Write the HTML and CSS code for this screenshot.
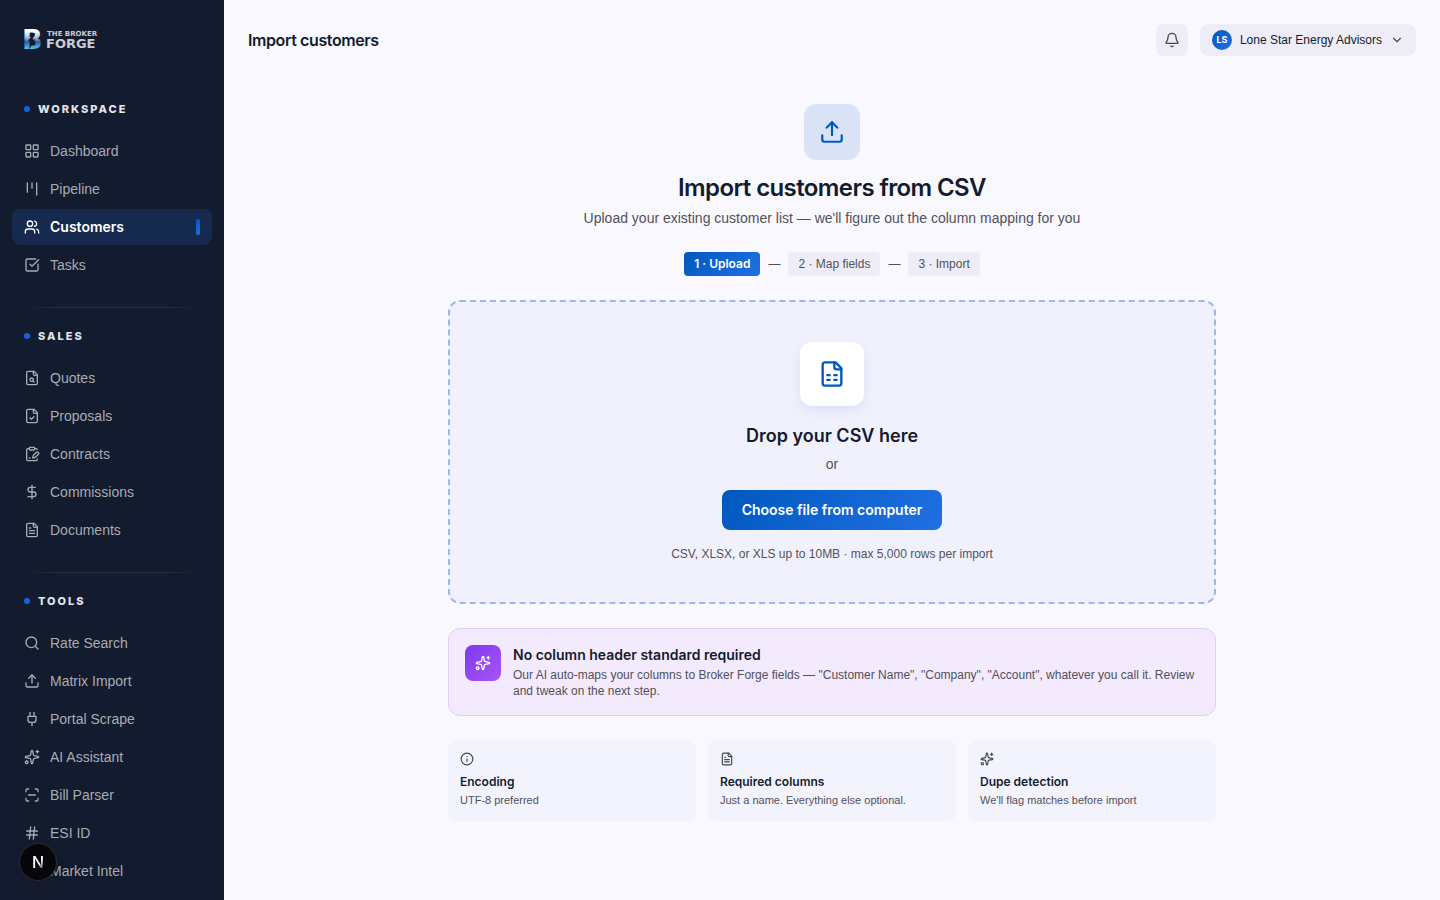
FILE: index.html
```html
<!DOCTYPE html>
<html lang="en">
<head>
    <meta charset="UTF-8">
    <meta name="viewport" content="width=device-width, initial-scale=1">
    <title>Import customers</title>
    <link rel="stylesheet" href="styles.css">
</head>
<body>
<svg class="sprite" aria-hidden="true">
    <symbol id="i-grid" viewBox="0 0 24 24"><rect x="3" y="3" width="7" height="7" rx="1"/><rect x="14" y="3" width="7" height="7" rx="1"/><rect x="14" y="14" width="7" height="7" rx="1"/><rect x="3" y="14" width="7" height="7" rx="1"/></symbol>
    <symbol id="i-kanban" viewBox="0 0 24 24"><path d="M5 3v14M12 3v8M19 3v18"/></symbol>
    <symbol id="i-users" viewBox="0 0 24 24"><path d="M16 21v-2a4 4 0 0 0-4-4H6a4 4 0 0 0-4 4v2"/><path d="M16 3.128a4 4 0 0 1 0 7.744"/><path d="M22 21v-2a4 4 0 0 0-3-3.87"/><circle cx="9" cy="7" r="4"/></symbol>
    <symbol id="i-check" viewBox="0 0 24 24"><path d="M21 10.656V19a2 2 0 0 1-2 2H5a2 2 0 0 1-2-2V5a2 2 0 0 1 2-2h12.344"/><path d="m9 11 3 3L22 4"/></symbol>
    <symbol id="i-file-search" viewBox="0 0 24 24"><path d="M15 2H6a2 2 0 0 0-2 2v16a2 2 0 0 0 2 2h12a2 2 0 0 0 2-2V7Z"/><path d="M14 2v4a2 2 0 0 0 2 2h4"/><circle cx="11.5" cy="14.5" r="2.5"/><path d="M13.3 16.3 15 18"/></symbol>
    <symbol id="i-file-check" viewBox="0 0 24 24"><path d="M15 2H6a2 2 0 0 0-2 2v16a2 2 0 0 0 2 2h12a2 2 0 0 0 2-2V7Z"/><path d="M14 2v4a2 2 0 0 0 2 2h4"/><path d="m9 15 2 2 4-4"/></symbol>
    <symbol id="i-contract" viewBox="0 0 24 24"><rect x="8" y="2" width="8" height="4" rx="1"/><path d="M8 4H6a2 2 0 0 0-2 2v14a2 2 0 0 0 2 2h12a2 2 0 0 0 2-2v-.5"/><path d="M16 4h2a2 2 0 0 1 1.73 1"/><path d="M8 18h1"/><path d="M21.378 12.626a1 1 0 0 0-3.004-3.004l-4.01 4.012a2 2 0 0 0-.506.854l-.837 2.87a.5.5 0 0 0 .62.62l2.87-.837a2 2 0 0 0 .854-.506z"/></symbol>
    <symbol id="i-dollar" viewBox="0 0 24 24"><path d="M12 2v20"/><path d="M17 5H9.5a3.5 3.5 0 0 0 0 7h5a3.5 3.5 0 0 1 0 7H6"/></symbol>
    <symbol id="i-file" viewBox="0 0 24 24"><path d="M15 2H6a2 2 0 0 0-2 2v16a2 2 0 0 0 2 2h12a2 2 0 0 0 2-2V7Z"/><path d="M14 2v4a2 2 0 0 0 2 2h4"/><path d="M10 9H8M16 13H8M16 17H8"/></symbol>
    <symbol id="i-search" viewBox="0 0 24 24"><circle cx="11" cy="11" r="8"/><path d="m21 21-4.34-4.34"/></symbol>
    <symbol id="i-upload" viewBox="0 0 24 24"><path d="M12 3v12"/><path d="m17 8-5-5-5 5"/><path d="M21 15v4a2 2 0 0 1-2 2H5a2 2 0 0 1-2-2v-4"/></symbol>
    <symbol id="i-plug" viewBox="0 0 24 24"><path d="M12 22v-5M9 8V2M15 8V2"/><path d="M18 8v5a4 4 0 0 1-4 4h-4a4 4 0 0 1-4-4V8Z"/></symbol>
    <symbol id="i-sparkles" viewBox="0 0 24 24"><path d="M11.017 2.814a1 1 0 0 1 1.966 0l1.051 5.558a2 2 0 0 0 1.594 1.594l5.558 1.051a1 1 0 0 1 0 1.966l-5.558 1.051a2 2 0 0 0-1.594 1.594l-1.051 5.558a1 1 0 0 1-1.966 0l-1.051-5.558a2 2 0 0 0-1.594-1.594l-5.558-1.051a1 1 0 0 1 0-1.966l5.558-1.051a2 2 0 0 0 1.594-1.594z"/><path d="M20 2v4M22 4h-4"/><circle cx="4" cy="20" r="2"/></symbol>
    <symbol id="i-scan" viewBox="0 0 24 24"><path d="M3 7V5a2 2 0 0 1 2-2h2M17 3h2a2 2 0 0 1 2 2v2M21 17v2a2 2 0 0 1-2 2h-2M7 21H5a2 2 0 0 1-2-2v-2M7 12h10"/></symbol>
    <symbol id="i-hash" viewBox="0 0 24 24"><path d="M4 9h16M4 15h16M10 3 8 21M16 3l-2 18"/></symbol>
    <symbol id="i-trend" viewBox="0 0 24 24"><path d="M16 7h6v6"/><path d="m22 7-8.5 8.5-5-5L2 17"/></symbol>
    <symbol id="i-bell" viewBox="0 0 24 24"><path d="M10.268 21a2 2 0 0 0 3.464 0"/><path d="M3.262 15.326A1 1 0 0 0 4 17h16a1 1 0 0 0 .74-1.673C19.41 13.956 18 12.499 18 8A6 6 0 0 0 6 8c0 4.499-1.411 5.956-2.738 7.326"/></symbol>
    <symbol id="i-chevron" viewBox="0 0 24 24"><path d="m6 9 6 6 6-6"/></symbol>
    <symbol id="i-sheet" viewBox="0 0 24 24"><path d="M15 2H6a2 2 0 0 0-2 2v16a2 2 0 0 0 2 2h12a2 2 0 0 0 2-2V7Z"/><path d="M14 2v4a2 2 0 0 0 2 2h4"/><path d="M8 13h2M14 13h2M8 17h2M14 17h2"/></symbol>
    <symbol id="i-info" viewBox="0 0 24 24"><circle cx="12" cy="12" r="10"/><path d="M12 16v-4M12 8h.01"/></symbol>
</svg>

<div class="app">
    <aside class="sidebar">
        <a href="#" class="logo" aria-label="The Broker Forge">
            <svg width="76" height="24" viewBox="0 0 76 24">
                <defs>
                    <linearGradient id="b-fill" x1="0" y1="0" x2="0" y2="1">
                        <stop offset="0.25" stop-color="#ffffff"/>
                        <stop offset="0.45" stop-color="#a9b4c4"/>
                        <stop offset="0.58" stop-color="#2a5f9a"/>
                        <stop offset="0.82" stop-color="#5cc8f5"/>
                    </linearGradient>
                </defs>
                <text class="logo-b" x="-2" y="21" fill="url(#b-fill)">B</text>
                <path d="M9.500 5 4 13h3L4.500 22.500 11 11.500H8.500L11 5z" fill="#131b2e"/>
                <text class="logo-the" x="23" y="8">THE BROKER</text>
                <text class="logo-forge" x="22" y="20">FORGE</text>
            </svg>
        </a>

        <nav class="nav">
            <section class="group">
                <h2 class="group-title">Workspace</h2>
                <a href="#" class="nav-item"><svg class="icon"><use href="#i-grid"/></svg>Dashboard</a>
                <a href="#" class="nav-item"><svg class="icon"><use href="#i-kanban"/></svg>Pipeline</a>
                <a href="#" class="nav-item active" aria-current="page"><svg class="icon"><use href="#i-users"/></svg>Customers</a>
                <a href="#" class="nav-item"><svg class="icon"><use href="#i-check"/></svg>Tasks</a>
            </section>
            <section class="group">
                <h2 class="group-title">Sales</h2>
                <a href="#" class="nav-item"><svg class="icon"><use href="#i-file-search"/></svg>Quotes</a>
                <a href="#" class="nav-item"><svg class="icon"><use href="#i-file-check"/></svg>Proposals</a>
                <a href="#" class="nav-item"><svg class="icon"><use href="#i-contract"/></svg>Contracts</a>
                <a href="#" class="nav-item"><svg class="icon"><use href="#i-dollar"/></svg>Commissions</a>
                <a href="#" class="nav-item"><svg class="icon"><use href="#i-file"/></svg>Documents</a>
            </section>
            <section class="group">
                <h2 class="group-title">Tools</h2>
                <a href="#" class="nav-item"><svg class="icon"><use href="#i-search"/></svg>Rate Search</a>
                <a href="#" class="nav-item"><svg class="icon"><use href="#i-upload"/></svg>Matrix Import</a>
                <a href="#" class="nav-item"><svg class="icon"><use href="#i-plug"/></svg>Portal Scrape</a>
                <a href="#" class="nav-item"><svg class="icon"><use href="#i-sparkles"/></svg>AI Assistant</a>
                <a href="#" class="nav-item"><svg class="icon"><use href="#i-scan"/></svg>Bill Parser</a>
                <a href="#" class="nav-item"><svg class="icon"><use href="#i-hash"/></svg>ESI ID</a>
                <a href="#" class="nav-item"><svg class="icon"><use href="#i-trend"/></svg>Market Intel</a>
            </section>
        </nav>
    </aside>

    <div class="page">
        <header class="topbar">
            <h1 class="topbar-title">Import customers</h1>
            <div class="topbar-actions">
                <button type="button" class="bell" aria-label="Notifications"><svg class="icon"><use href="#i-bell"/></svg></button>
                <button type="button" class="account">
                    <span class="avatar">LS</span>
                    <span class="account-name">Lone Star Energy Advisors</span>
                    <svg class="icon icon-sm"><use href="#i-chevron"/></svg>
                </button>
            </div>
        </header>

        <main class="content">
            <div class="intro">
                <div class="intro-icon"><svg class="icon"><use href="#i-upload"/></svg></div>
                <h2 class="intro-title">Import customers from CSV</h2>
                <p class="intro-text">Upload your existing customer list — we'll figure out the column mapping for you</p>
            </div>

            <div class="steps">
                <span class="step current">1 · Upload</span>
                <span>—</span>
                <span class="step">2 · Map fields</span>
                <span>—</span>
                <span class="step">3 · Import</span>
            </div>

            <div class="dropzone">
                <div class="drop-icon"><svg class="icon"><use href="#i-sheet"/></svg></div>
                <h3 class="drop-title">Drop your CSV here</h3>
                <p class="drop-or">or</p>
                <button type="button" class="choose">Choose file from computer</button>
                <p class="drop-hint">CSV, XLSX, or XLS up to 10MB · max 5,000 rows per import</p>
            </div>

            <div class="ai-note">
                <div class="ai-icon"><svg class="icon"><use href="#i-sparkles"/></svg></div>
                <div class="ai-body">
                    <h3 class="ai-title">No column header standard required</h3>
                    <p class="ai-text">Our AI auto-maps your columns to Broker Forge fields — "Customer Name", "Company", "Account", whatever you call it. Review and tweak on the next step.</p>
                </div>
            </div>

            <div class="tips">
                <div class="tip">
                    <svg class="icon icon-sm"><use href="#i-info"/></svg>
                    <h4 class="tip-title">Encoding</h4>
                    <p class="tip-text">UTF-8 preferred</p>
                </div>
                <div class="tip">
                    <svg class="icon icon-sm"><use href="#i-file"/></svg>
                    <h4 class="tip-title">Required columns</h4>
                    <p class="tip-text">Just a name. Everything else optional.</p>
                </div>
                <div class="tip">
                    <svg class="icon icon-sm"><use href="#i-sparkles"/></svg>
                    <h4 class="tip-title">Dupe detection</h4>
                    <p class="tip-text">We'll flag matches before import</p>
                </div>
            </div>
        </main>
    </div>
</div>

<button type="button" class="dev-badge" aria-label="Open dev tools">
    <svg width="36" height="36" viewBox="0 0 36 36">
        <defs>
            <linearGradient id="n-fill" x1="0" y1="0" x2="1" y2="1">
                <stop offset="0.6" stop-color="#ffffff"/>
                <stop offset="0.85" stop-color="#ffffff" stop-opacity="0.2"/>
            </linearGradient>
        </defs>
        <text class="dev-n" x="18" y="24" text-anchor="middle" fill="url(#n-fill)">N</text>
    </svg>
</button>
</body>
</html>
```
FILE: styles.css
```css
* {
    box-sizing: border-box;
}

body {
    margin: 0;
    font-family: "Liberation Sans", Arial, sans-serif;
    font-size: 14px;
    line-height: 20px;
    color: #131b2e;
    background-color: #faf8ff;
}

h1, h2, h3, h4, p {
    margin: 0;
}

button {
    font: inherit;
    color: inherit;
    border: none;
    padding: 0;
    cursor: pointer;
}

h1, h2, h3, h4,
.active,
.current,
.choose,
.avatar {
    font-family: Inter, "Liberation Sans", sans-serif;
}

a {
    color: inherit;
    text-decoration: none;
}

.sprite {
    display: none;
}

.icon {
    width: 16px;
    height: 16px;
    flex: none;
    fill: none;
    stroke: currentColor;
    stroke-width: 2;
    stroke-linecap: round;
    stroke-linejoin: round;
}

.icon-sm {
    width: 14px;
    height: 14px;
}

.app {
    display: flex;
    height: 100vh;
}

/* sidebar */
.sidebar {
    width: 224px;
    flex: none;
    overflow: hidden;
    background-color: #131b2e;
    color: #a8abb3;
}

.logo {
    display: flex;
    align-items: center;
    height: 80px;
    padding: 0 24px;
}

.logo svg {
    overflow: visible;
    font-family: "DejaVu Sans", sans-serif;
    font-weight: 700;
    fill: #c9ccd3;
}

.logo-b {
    font-size: 27px;
}

.logo-the {
    font-size: 7px;
}

.logo-forge {
    font-size: 13px;
}

.nav {
    padding: 21px 12px;
}

.group {
    display: flex;
    flex-direction: column;
    gap: 2px;
}

.group + .group::before {
    content: "";
    height: 1px;
    margin: 24px 12px 18px;
    background: linear-gradient(to right, transparent, #2b3244 20%, #2b3244 80%, transparent);
}

.group-title {
    display: flex;
    align-items: center;
    gap: 8px;
    padding: 0 12px;
    margin-bottom: 14px;
    font-size: 11px;
    line-height: 16px;
    font-weight: 800;
    letter-spacing: 2px;
    text-transform: uppercase;
    color: #e2e4e9;
}

.group-title::before {
    content: "";
    width: 6px;
    height: 6px;
    border-radius: 50%;
    background-color: #1464d8;
}

.nav-item {
    display: flex;
    align-items: center;
    gap: 10px;
    height: 36px;
    padding: 0 12px;
    border-radius: 8px;
}

.nav-item.active {
    background-color: #162a50;
    color: #fff;
    font-weight: 600;
}

.nav-item.active::after {
    content: "";
    width: 4px;
    height: 16px;
    margin-left: auto;
    border-radius: 2px;
    background: linear-gradient(135deg, #0058be, #2170e4);
}

/* main column */
.page {
    flex: 1;
    min-width: 0;
    overflow: auto;
}

.topbar {
    display: flex;
    align-items: center;
    justify-content: space-between;
    height: 80px;
    padding: 0 24px;
}

.topbar-title {
    font-size: 16px;
    line-height: 24px;
    font-weight: 600;
    letter-spacing: -0.025em;
}

.topbar-actions {
    display: flex;
    gap: 12px;
}

.bell,
.account {
    display: flex;
    align-items: center;
    justify-content: center;
    height: 32px;
    border-radius: 8px;
    background-color: #eeedf7;
}

.bell {
    width: 32px;
    color: #45464d;
}

.account {
    gap: 8px;
    padding: 0 12px;
    font-size: 12px;
    line-height: 16px;
}

.account .icon {
    color: #45464d;
}

.avatar {
    width: 20px;
    height: 20px;
    border-radius: 50%;
    background: linear-gradient(135deg, #0058be, #2170e4);
    color: #fff;
    font-size: 9px;
    line-height: 20px;
    font-weight: 700;
}

.content {
    display: flex;
    flex-direction: column;
    gap: 24px;
    max-width: 816px;
    margin: 0 auto;
    padding: 24px;
}

.intro {
    display: flex;
    flex-direction: column;
    align-items: center;
    text-align: center;
}

.intro-icon {
    display: grid;
    place-items: center;
    width: 56px;
    height: 56px;
    margin-bottom: 12px;
    border-radius: 12px;
    background-color: #dae3f6;
    color: #0058be;
}

.intro-icon .icon {
    width: 26px;
    height: 26px;
}

.intro-title {
    font-size: 24px;
    line-height: 32px;
    font-weight: 600;
    letter-spacing: -0.025em;
}

.intro-text {
    margin-top: 4px;
    color: #515159;
}

.steps {
    display: flex;
    justify-content: center;
    align-items: center;
    gap: 8px;
    font-size: 12px;
    line-height: 16px;
    color: #515159;
}

.step {
    padding: 4px 10px;
    border-radius: 4px;
    background-color: #eeedf7;
}

.step.current {
    background: linear-gradient(135deg, #0058be, #2170e4);
    color: #fff;
    font-weight: 600;
}

.dropzone {
    display: flex;
    flex-direction: column;
    align-items: center;
    padding: 40px;
    border: 2px dashed #99bae6;
    border-radius: 12px;
    background-color: #f1f1fd;
    text-align: center;
}

.drop-icon {
    display: grid;
    place-items: center;
    width: 64px;
    height: 64px;
    border-radius: 12px;
    background-color: #fff;
    color: #0058be;
    box-shadow: 0 4px 12px rgba(0, 88, 190, 0.1);
}

.drop-icon .icon {
    width: 28px;
    height: 28px;
}

.drop-title {
    margin-top: 16px;
    font-size: 18px;
    line-height: 28px;
    font-weight: 600;
}

.drop-or {
    margin-top: 4px;
    color: #515159;
}

.choose {
    height: 40px;
    margin: 16px 0;
    padding: 0 20px;
    border-radius: 8px;
    background: linear-gradient(135deg, #0058be, #2170e4);
    color: #fff;
    font-weight: 600;
}

.drop-hint {
    font-size: 12px;
    line-height: 16px;
    color: #515159;
}

.ai-note {
    display: flex;
    gap: 12px;
    padding: 16px;
    border: 1px solid #dccdfa;
    border-radius: 12px;
    background-color: #f3eafd;
}

.ai-icon {
    display: grid;
    place-items: center;
    width: 36px;
    height: 36px;
    flex: none;
    border-radius: 8px;
    background: linear-gradient(135deg, #7c3aed, #a855f7);
    color: #fff;
}

.ai-title {
    font-size: 14px;
    line-height: 20px;
    font-weight: 600;
}

.ai-text {
    margin-top: 2px;
    font-size: 12px;
    line-height: 16px;
    color: #515159;
}

.tips {
    display: grid;
    grid-template-columns: repeat(3, 1fr);
    gap: 12px;
}

.tip {
    padding: 12px;
    border-radius: 8px;
    background-color: #f3f3fe;
    color: #45464d;
}

.tip .icon {
    display: block;
    margin-bottom: 8px;
}

.tip-title {
    font-size: 12px;
    line-height: 16px;
    font-weight: 600;
    color: #131b2e;
}

.tip-text {
    margin-top: 2px;
    font-size: 11px;
    line-height: 17px;
    color: #515159;
}

/* floating dev tools button */
.dev-badge {
    position: fixed;
    left: 20px;
    bottom: 20px;
    width: 36px;
    height: 36px;
    border-radius: 50%;
    background-color: #06070a;
    box-shadow: 0 0 0 1px #2b2c30, 0 16px 32px -8px rgba(0, 0, 0, 0.24);
}

.dev-badge svg {
    display: block;
}

.dev-n {
    font-family: Inter, sans-serif;
    font-size: 16px;
    font-weight: 500;
}
```
